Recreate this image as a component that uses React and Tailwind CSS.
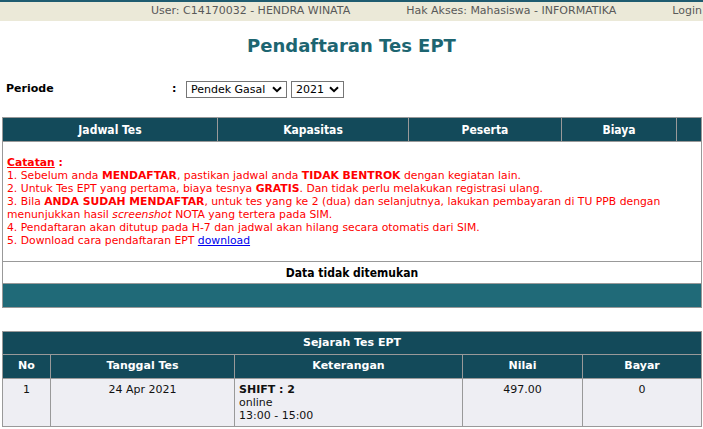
const V = "font-['DejaVu_Sans',Verdana,sans-serif]";
const T = "font-['DejaVu_Sans_Condensed','Liberation_Sans',Tahoma,sans-serif]";

function Chevron() {
  return (
    <svg width="10" height="7" viewBox="0 0 10 7" className="shrink-0">
      <path d="M1 1.2 L5 5.2 L9 1.2" fill="none" stroke="#000" strokeWidth="2" />
    </svg>
  );
}

function FakeSelect({ label, width }) {
  return (
    <div
      className={`flex h-[17px] items-center justify-between border border-[#767676] bg-white pl-[4px] pr-[4px] text-[11px] text-black ${width}`}
    >
      <span className="leading-none">{label}</span>
      <Chevron />
    </div>
  );
}

export default function App() {
  return (
    <div className={`${V} min-h-[429px] w-[703px] bg-white text-[11px] text-black`}>
      {/* top bar */}
      <div className="flex h-[21px] items-center justify-end gap-[56px] border-t-2 border-[#1f5c70] bg-[#ebe9d8] pr-[1px] text-[11px] text-[#595959]">
        <span>User: C14170032 - HENDRA WINATA</span>
        <span>Hak Akses: Mahasiswa - INFORMATIKA</span>
        <span>Login</span>
      </div>

      {/* title */}
      <div className="mt-[14px] h-[22px] text-center text-[18px] font-bold leading-[22px] text-[#1d6571]">
        Pendaftaran Tes EPT
      </div>

      {/* periode */}
      <div className="mt-[24px] flex h-[17px] items-center">
        <div className="w-[172px] pl-[6px] font-bold">Periode</div>
        <div className="w-[14px] font-bold">:</div>
        <FakeSelect label="Pendek Gasal" width="w-[101px]" />
        <div className="w-[4px]" />
        <FakeSelect label="2021" width="w-[53px]" />
      </div>

      {/* table 1 */}
      <div className="ml-[2px] mt-[19px] w-[700px] border border-[#999]">
        <div className={`${T} grid h-[23px] grid-cols-[214px_191px_153px_115px_25px] bg-[#134a5a] text-[12px] font-bold text-white`}>
          <div className="flex items-center justify-center">Jadwal Tes</div>
          <div className="flex items-center justify-center border-l border-[#999]">Kapasitas</div>
          <div className="flex items-center justify-center border-l border-[#999]">Peserta</div>
          <div className="flex items-center justify-center border-l border-[#999]">Biaya</div>
          <div className="border-l border-[#999]"></div>
        </div>
        <div className="h-[120px] border-t border-[#999] pl-[4px] pt-[14px] text-[10.8px] leading-[13px] text-[#ff0000]">
          <div className="whitespace-nowrap font-bold">
            <span className="underline">Catatan</span> :
          </div>
          <div className="whitespace-nowrap">
            1. Sebelum anda <b>MENDAFTAR</b>, pastikan jadwal anda <b>TIDAK BENTROK</b> dengan kegiatan lain.
          </div>
          <div className="whitespace-nowrap">
            2. Untuk Tes EPT yang pertama, biaya tesnya <b>GRATIS</b>. Dan tidak perlu melakukan registrasi ulang.
          </div>
          <div className="whitespace-nowrap">
            3. Bila <b>ANDA SUDAH MENDAFTAR</b>, untuk tes yang ke 2 (dua) dan selanjutnya, lakukan pembayaran di TU PPB dengan
          </div>
          <div className="whitespace-nowrap">
            menunjukkan hasil <i>screenshot</i> NOTA yang tertera pada SIM.
          </div>
          <div className="whitespace-nowrap">
            4. Pendaftaran akan ditutup pada H-7 dan jadwal akan hilang secara otomatis dari SIM.
          </div>
          <div className="whitespace-nowrap">
            5. Download cara pendaftaran EPT{" "}
            <span className="text-[#0000ee] underline">download</span>
          </div>
        </div>
        <div className={`${T} flex h-[22px] items-center justify-center border-t border-[#999] text-[12px] font-bold text-black`}>
          Data tidak ditemukan
        </div>
        <div className="h-[24px] border-t border-[#999] bg-[#206a78]"></div>
      </div>

      {/* table 2 */}
      <div className="ml-[2px] mt-[23px] w-[700px] border border-[#999]">
        <div className="flex h-[22px] items-center justify-center bg-[#134a5a] text-[11px] font-bold text-white">
          Sejarah Tes EPT
        </div>
        <div className="grid h-[24px] grid-cols-[47px_184px_228px_120px_119px] border-t border-[#999] bg-[#134a5a] text-[11px] font-bold text-white">
          <div className="flex items-center justify-center">No</div>
          <div className="flex items-center justify-center border-l border-[#999]">Tanggal Tes</div>
          <div className="flex items-center justify-center border-l border-[#999]">Keterangan</div>
          <div className="flex items-center justify-center border-l border-[#999]">Nilai</div>
          <div className="flex items-center justify-center border-l border-[#999]">Bayar</div>
        </div>
        <div className="grid h-[48px] grid-cols-[47px_184px_228px_120px_119px] border-t border-[#999] bg-[#eeeef3] text-[11px] leading-[13px] text-[#111]">
          <div className="pt-[4px] text-center">1</div>
          <div className="border-l border-[#999] pt-[4px] text-center">24 Apr 2021</div>
          <div className="border-l border-[#999] pl-[4px] pt-[4px]">
            <div className="font-bold">SHIFT : 2</div>
            <div>online</div>
            <div>13:00 - 15:00</div>
          </div>
          <div className="border-l border-[#999] pt-[4px] text-center">497.00</div>
          <div className="border-l border-[#999] pt-[4px] text-center">0</div>
        </div>
      </div>
    </div>
  );
}
